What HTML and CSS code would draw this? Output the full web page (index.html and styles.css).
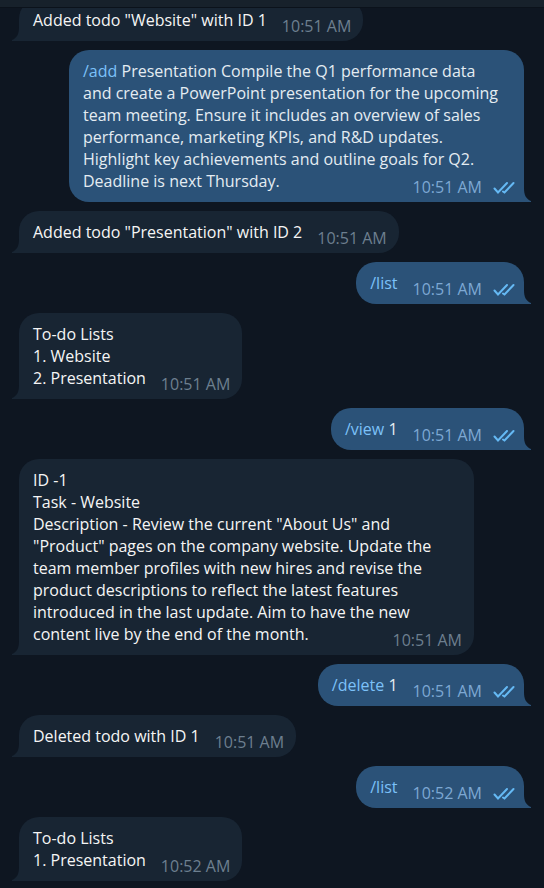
FILE: index.html
```html
<!DOCTYPE html>
<html lang="en">
<head>
<meta charset="utf-8">
<meta name="viewport" content="width=device-width, initial-scale=1">
<title>To-do bot chat</title>
<link rel="stylesheet" href="styles.css">
</head>
<body>
<svg class="sprite" aria-hidden="true">
  <symbol id="read" viewBox="0 0 22 13"><path d="M1.500 7.500l3.500 4L14 2M10 10.500l1.500 1L20.500 2"/></symbol>
  <symbol id="tail" viewBox="0 0 7 14"><path d="M0 0c0 7 2 11 7 13v1H0z"/></symbol>
</svg>
<header class="topbar"></header>
<main class="chat">
  <article class="bubble in">Added todo "Website" with ID 1<span class="meta"><time>10:51 AM</time></span><svg class="tail"><use href="#tail"/></svg></article>
  <article class="bubble out"><a href="#add">/add</a> Presentation Compile the Q1 performance data and create a PowerPoint presentation for the upcoming team meeting. Ensure it includes an overview of sales performance, marketing KPIs, and R&amp;D updates. Highlight key achievements and outline goals for Q2. Deadline is next Thursday.<span class="meta"><time>10:51 AM</time><svg class="read"><use href="#read"/></svg></span><svg class="tail"><use href="#tail"/></svg></article>
  <article class="bubble in">Added todo "Presentation" with ID 2<span class="meta"><time>10:51 AM</time></span><svg class="tail"><use href="#tail"/></svg></article>
  <article class="bubble out"><a href="#list">/list</a><span class="meta"><time>10:51 AM</time><svg class="read"><use href="#read"/></svg></span><svg class="tail"><use href="#tail"/></svg></article>
  <article class="bubble in">To-do Lists<br>1. Website<br>2. Presentation<span class="meta"><time>10:51 AM</time></span><svg class="tail"><use href="#tail"/></svg></article>
  <article class="bubble out"><a href="#view">/view</a> 1<span class="meta"><time>10:51 AM</time><svg class="read"><use href="#read"/></svg></span><svg class="tail"><use href="#tail"/></svg></article>
  <article class="bubble in">ID -1<br>Task - Website<br>Description - Review the current "About Us" and "Product" pages on the company website. Update the team member profiles with new hires and revise the product descriptions to reflect the latest features introduced in the last update. Aim to have the new content live by the end of the month.<span class="meta"><time>10:51 AM</time></span><svg class="tail"><use href="#tail"/></svg></article>
  <article class="bubble out"><a href="#delete">/delete</a> 1<span class="meta"><time>10:51 AM</time><svg class="read"><use href="#read"/></svg></span><svg class="tail"><use href="#tail"/></svg></article>
  <article class="bubble in">Deleted todo with ID 1<span class="meta"><time>10:51 AM</time></span><svg class="tail"><use href="#tail"/></svg></article>
  <article class="bubble out"><a href="#list">/list</a><span class="meta"><time>10:52 AM</time><svg class="read"><use href="#read"/></svg></span><svg class="tail"><use href="#tail"/></svg></article>
  <article class="bubble in">To-do Lists<br>1. Presentation<span class="meta"><time>10:52 AM</time></span><svg class="tail"><use href="#tail"/></svg></article>
</main>
</body>
</html>
```
FILE: styles.css
```css
* {
  box-sizing: border-box;
}

body {
  margin: 0;
  background: #0e1621;
  color: #f5f5f5;
  font: 16px/22px "Open Sans", "Noto Sans", sans-serif;
}

.sprite {
  position: absolute;
  width: 0;
  height: 0;
}

/* Lower edge of the title bar; messages scroll beneath it. */
.topbar {
  position: sticky;
  top: 0;
  z-index: 1;
  height: 8px;
  background: #17212b;
  border-bottom: 1px solid #0b121b;
}

.chat {
  display: flex;
  flex-direction: column;
  gap: 9px;
  margin-top: -9px;
  padding: 0 20px 7px 19px;
}

.bubble {
  position: relative;
  max-width: 455px;
  padding: 10px 14px;
  border-radius: 20px;
}

.in {
  align-self: flex-start;
  background: #182533;
  border-bottom-left-radius: 0;
}

.out {
  align-self: flex-end;
  padding-right: 18px;
  background: #2b5278;
  color: #e4ecf2;
  border-bottom-right-radius: 0;
}

.bubble a {
  color: #7cc1f8;
  text-decoration: none;
}

.meta {
  float: right;
  display: flex;
  align-items: center;
  gap: 11px;
  margin: 6px -2px -6px 15px;
  color: #6d7f8f;
}

.out .meta {
  margin-right: -9px;
  color: #7da8d3;
}

.read {
  width: 22px;
  height: 13px;
  fill: none;
  stroke: #65b9f4;
  stroke-width: 2;
  stroke-linecap: round;
}

.tail {
  position: absolute;
  bottom: 0;
  width: 7px;
  height: 14px;
}

.out .tail {
  left: 100%;
  fill: #2b5278;
}

.in .tail {
  right: 100%;
  fill: #182533;
  transform: scaleX(-1);
}
```
